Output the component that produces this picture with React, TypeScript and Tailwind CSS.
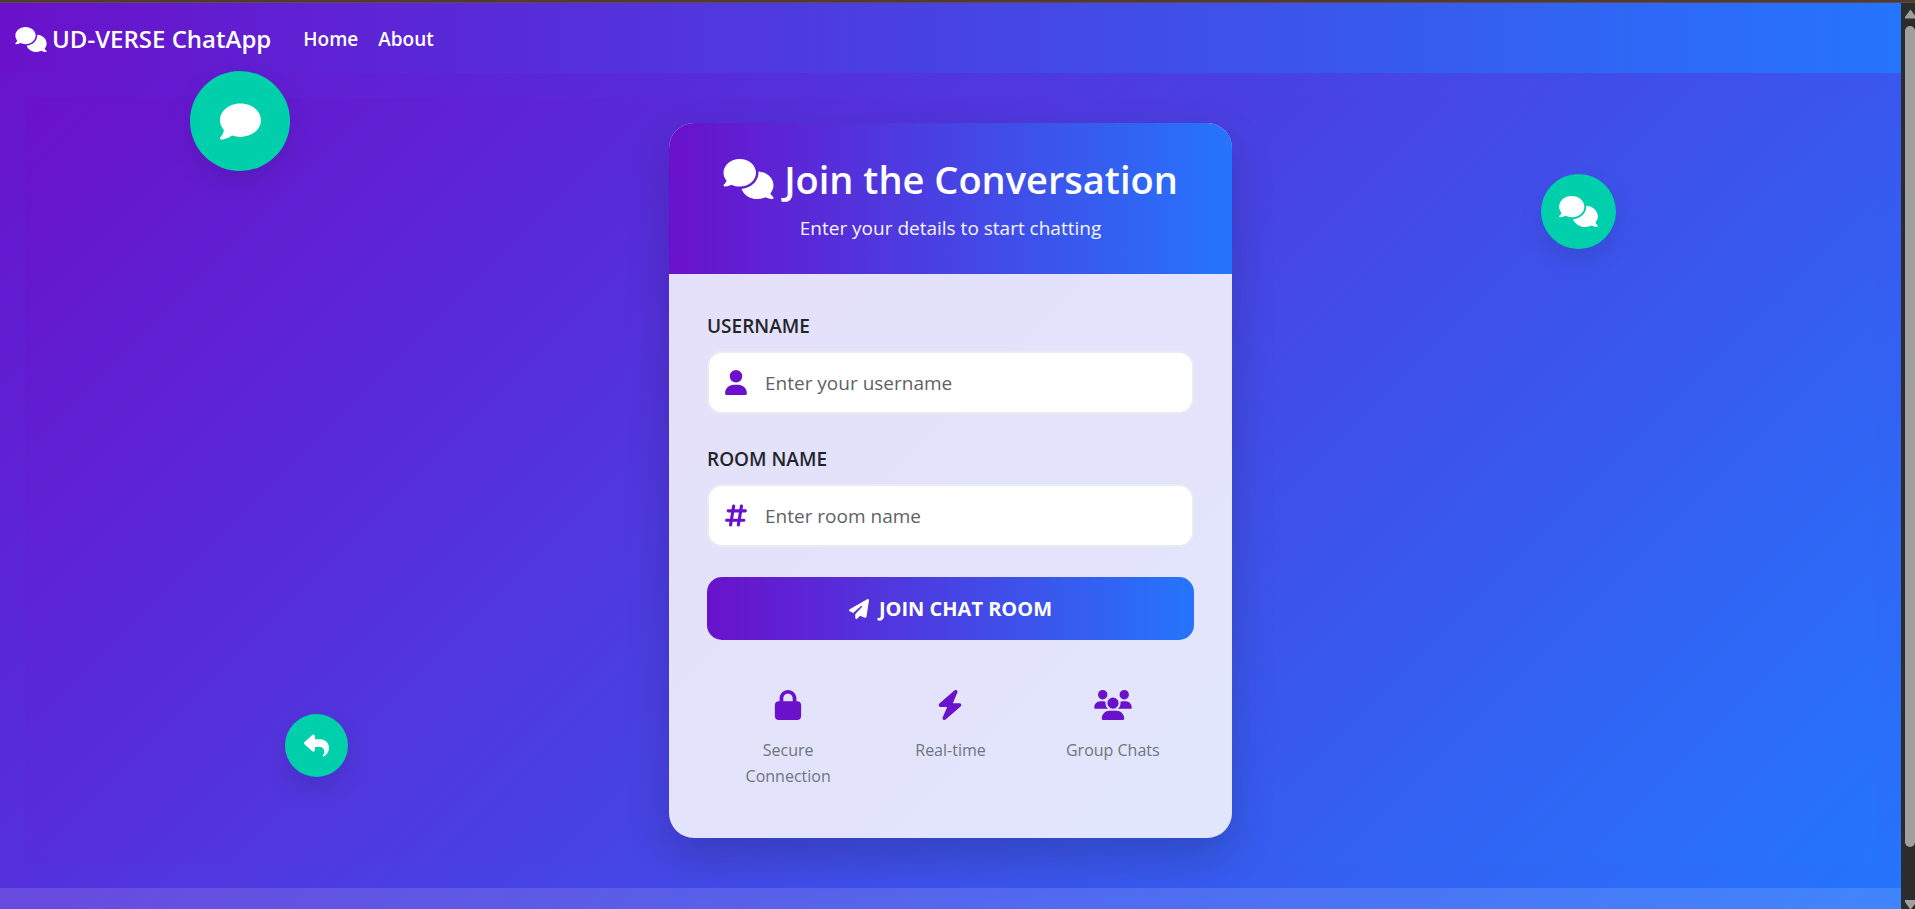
import type { ReactNode } from "react";
import {
  FaBolt,
  FaComment,
  FaComments,
  FaHashtag,
  FaLock,
  FaPaperPlane,
  FaReply,
  FaUser,
  FaUsers,
} from "react-icons/fa6";

function Navbar() {
  return (
    <nav className="flex h-[70px] items-center bg-[linear-gradient(to_right,#6a11cb,#2575fc)] px-[15px] pt-0.5 text-white">
      <a href="#" className="mr-8 flex items-center gap-[5px] text-2xl font-semibold">
        <FaComments className="h-[25px] w-[32px]" />
        UD-VERSE ChatApp
      </a>
      <div className="flex gap-5 text-[19px] font-semibold">
        <a href="#home">Home</a>
        <a href="#about">About</a>
      </div>
    </nav>
  );
}

type FieldProps = { id: string; label: string; placeholder: string; icon: ReactNode };

function Field({ id, label, placeholder, icon }: FieldProps) {
  return (
    <div className="mb-[30px]">
      <label htmlFor={id} className="mb-2.5 block text-[19px] leading-[30px] font-semibold text-[#212529] uppercase">
        {label}
      </label>
      <div className="flex h-[63px] items-center rounded-[15px] border-2 border-[#e9ecef] bg-white pl-4 text-[#6a11cb]">
        {icon}
        <input
          id={id}
          type="text"
          placeholder={placeholder}
          className="ml-[18px] min-w-0 flex-1 bg-transparent pt-0.5 text-[19px] text-[#212529] outline-none placeholder:text-[#5e6266]"
        />
      </div>
    </div>
  );
}

function Feature({ icon, label }: { icon: ReactNode; label: string }) {
  return (
    <div className="flex flex-1 flex-col items-center gap-[17px] px-5 text-center">
      <span className="text-[30px] text-[#6a11cb]">{icon}</span>
      <span className="text-base leading-[26px] text-[#6c757d]">{label}</span>
    </div>
  );
}

function JoinCard() {
  return (
    <section className="relative w-[563px] max-w-full overflow-hidden rounded-[25px] bg-white/85 shadow-[0_19px_44px_rgba(0,0,0,0.18)]">
      <header className="bg-[linear-gradient(to_right,#6a11cb,#2575fc)] px-[30px] pt-8 pb-[31px] text-center text-white">
        <h1 className="flex items-center justify-center gap-2.5 text-[38px] leading-[48px] font-semibold">
          <FaComments className="h-[40px] w-[51px]" />
          Join the Conversation
        </h1>
        <p className="mt-2.5 text-[19px] leading-[30px] opacity-95">Enter your details to start chatting</p>
      </header>
      <form className="px-[38px] pt-[37px] pb-[49px]" onSubmit={(e) => e.preventDefault()}>
        <Field
          id="username"
          label="Username"
          placeholder="Enter your username"
          icon={<FaUser className="h-[25px] w-[22px]" />}
        />
        <Field
          id="room"
          label="Room Name"
          placeholder="Enter room name"
          icon={<FaHashtag className="h-[25px] w-[22px]" />}
        />
        <button
          type="submit"
          className="flex h-[63px] w-full items-center justify-center gap-2.5 rounded-[15px] bg-[linear-gradient(to_right,#6a11cb,#2575fc)] text-xl font-bold text-white uppercase"
        >
          <FaPaperPlane className="size-5" />
          Join Chat Room
        </button>
        <div className="mt-[50px] flex">
          <Feature icon={<FaLock />} label="Secure Connection" />
          <Feature icon={<FaBolt />} label="Real-time" />
          <Feature icon={<FaUsers className="w-[38px]" />} label="Group Chats" />
        </div>
      </form>
    </section>
  );
}

function Bubbles() {
  const bubble = "absolute flex items-center justify-center rounded-full bg-[#00cfab] text-white shadow-[0_10px_25px_rgba(0,0,0,0.1)]";
  return (
    <div aria-hidden="true">
      <div className={`${bubble} top-[-2px] left-[10%] size-[100px]`}>
        <FaComment className="size-[41px]" />
      </div>
      <div className={`${bubble} top-[101px] right-[15%] size-[75px]`}>
        <FaComments className="h-[31px] w-[39px]" />
      </div>
      <div className={`${bubble} bottom-[111px] left-[15%] size-[63px]`}>
        <FaReply className="size-[25px]" />
      </div>
    </div>
  );
}

function Scrollbar() {
  return (
    <div aria-hidden="true" className="flex w-[14px] shrink-0 flex-col items-end bg-[#2c2c2c] pt-1.5">
      <svg className="h-[10px] w-[10px]" viewBox="0 0 10 10">
        <path d="M0 9.5V8L5.5 0.5L10 6.5V9.5Z" fill="#9f9f9f" />
      </svg>
      <div className="mt-[7px] mb-[53px] w-[10px] flex-1 rounded-full bg-[#9f9f9f]" />
      <svg className="h-[9px] w-[10px]" viewBox="0 0 10 9">
        <path d="M0 0H10V4L6 9H5L0 2Z" fill="#9f9f9f" />
      </svg>
    </div>
  );
}

export default function App() {
  return (
    <div className="flex min-h-screen flex-col font-['Open_Sans','Noto_Sans',sans-serif]">
      <div className="h-[3px] border-b border-[#5c4d41] bg-[#543933]" />
      <div className="flex flex-1">
        <div className="flex min-w-0 flex-1 flex-col bg-[linear-gradient(135deg,#6a11cb,#2575fc)]">
          <Navbar />
          <main className="relative flex justify-center py-[50px]">
            <div className="absolute inset-[25px] bg-[linear-gradient(135deg,#6a11cb,#2575fc)]" />
            <Bubbles />
            <JoinCard />
          </main>
          <footer className="min-h-5 flex-1 bg-white/12" />
        </div>
        <Scrollbar />
      </div>
    </div>
  );
}
